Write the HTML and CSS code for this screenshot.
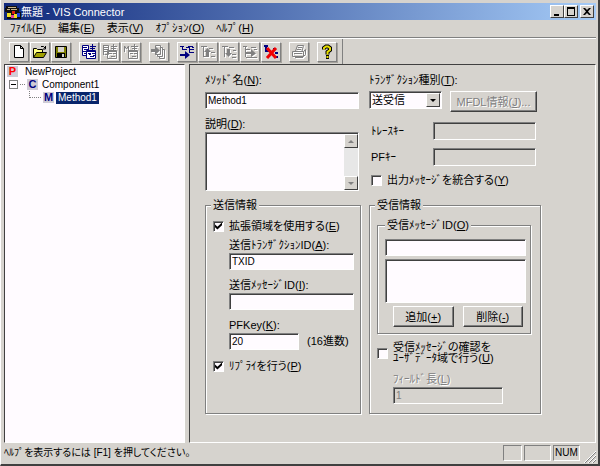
FILE: index.html
```html
<!DOCTYPE html>
<html lang="ja">
<head>
<meta charset="utf-8">
<title>無題 - VIS Connector</title>
<link rel="stylesheet" href="styles.css">
</head>
<body>
<div class="window">
  <header class="titlebar">
    <svg class="app-icon" viewBox="0 0 16 16" aria-hidden="true">
      <path fill="#111" d="M1 2h11v2h2v4h2v7H2V8H0V4h1z"/>
      <path fill="#c8b48c" d="M3 3h8v1H3zM2 5h3v1H2zM6 5h6v1H6z"/>
      <path fill="#e02010" d="M7 7h3v3H7z"/>
      <path fill="#f0e020" d="M2 9h4v4H2zM9 10h3v4H9z"/>
      <path fill="#2040e0" d="M12 9h3v4h-3z"/>
      <path fill="#e040a0" d="M6 11h3v3H6z"/>
    </svg>
    <h1 class="title">無題 - VIS Connector</h1>
    <button class="cap" aria-label="最小化"><svg viewBox="0 0 10 9"><path d="M2 7h5v2H2z"/></svg></button>
    <button class="cap" aria-label="最大化"><svg viewBox="0 0 10 9"><path fill-rule="evenodd" d="M1 0h8v9H1zM2 2v6h6V2z"/></svg></button>
    <button class="cap cap-close" aria-label="閉じる"><svg viewBox="0 0 10 9"><path d="M1 1h2l2 2 2-2h2L6 4.500l3 3.500H7L5 6 3 8H1l3-3.500z"/></svg></button>
  </header>

  <nav class="menubar">
    <button>ﾌｧｲﾙ(<u>F</u>)</button>
    <button>編集(<u>E</u>)</button>
    <button>表示(<u>V</u>)</button>
    <button>ｵﾌﾟｼｮﾝ(<u>O</u>)</button>
    <button>ﾍﾙﾌﾟ(<u>H</u>)</button>
  </nav>

  <div class="toolbar">
    <div class="tools">
      <button aria-label="新規"><svg viewBox="0 0 16 16"><path fill="#fff" stroke="#000" d="M3.500 1.500h6l3 3v9h-9zM9.500 1.500v3h3"/></svg></button>
      <button aria-label="開く"><svg viewBox="0 0 16 16"><path fill="#ffff80" stroke="#000" d="M1.500 13.500v-9h3l1 1h5v3"/><path fill="#a0a000" stroke="#000" d="M1.500 13.500l3-5h10l-3 5z"/><path fill="none" stroke="#000" d="M9 2.500h2.500l1.500 1.500M13.500 2v3H11"/></svg></button>
      <button aria-label="保存"><svg viewBox="0 0 16 16"><path fill="#808000" stroke="#000" d="M2.500 2.500h11v11h-11z"/><path fill="#d6d3ce" d="M5 3h6v5H5z"/><path d="M4 9h8v5H4z"/><path fill="#d6d3ce" d="M9 10h2v3H9z"/></svg></button>
    </div>
    <div class="tools">
      <button aria-label="プロジェクト"><svg viewBox="0 0 16 16"><path fill="#fff" stroke="#000080" d="M1.500 1.500h6v10h-6z"/><path stroke="#000080" d="M2 3.500h4M3 5.500h4M2 7.500h4M3 9.500h2M9 2.500h6M11.500 0v6M9 4.500h5"/><path fill="#fff" stroke="#000080" d="M5.500 6.500h9v8h-9z"/><path stroke="#000080" d="M5 7.500h10M7 9.500h3M8 10.500h2M9 12.500h4M11 9.500h3M12 11.500h2"/></svg></button>
      <button class="off" disabled aria-label="コンポーネント"><svg viewBox="0 0 16 16"><path fill="none" stroke="#808080" d="M1.500 1.500h5v9h-4M1.500 1v10M2 3.500h4M2 5.500h4M2 7.500h3M9 2.500h6M11.500 0v6M9 4.500h5M5.500 6.500h9v8h-9zM5 7.500h10M7 9.500h3M9 12.500h4M11 9.500h3"/></svg></button>
      <button class="off" disabled aria-label="メソッド"><svg viewBox="0 0 16 16"><path fill="none" stroke="#808080" d="M1.500 8V2l2 3 2-3v6M8 2.500h7M11.500 0v6M9 4.500h5M5.500 6.500h9v8h-9zM5 7.500h10M7 9.500h3M9 12.500h4M11 9.500h3"/></svg></button>
    </div>
    <div class="tools">
      <button class="off" disabled aria-label="出力"><svg viewBox="0 0 16 16"><path fill="none" stroke="#808080" d="M4.500 4V1.500h5v9h-5V9M9.500 3.500h2v9h-5v-2M11.500 5.500h2v9h-5v-2"/><path fill="#808080" d="M0 5h4V2l5 4.500L4 11V8H0z"/></svg></button>
    </div>
    <div class="tools">
      <button aria-label="追加"><svg viewBox="0 0 16 16"><path fill="none" stroke="#000080" d="M1 2.500h4M3.500 2v4M3 5.500h5M7 3.500h3M9 2.500h5M10 5.500h5M11 8.500h4M10.500 3v6M13 3.500h2"/><path fill="#000080" d="M1 10h5V7l5 4-5 4v-3H1z"/></svg></button>
      <button class="off" disabled aria-label="上へ"><svg viewBox="0 0 16 16"><path fill="none" stroke="#808080" d="M1 2.500h6M3.500 2v11M4 12.500h2M9 4.500h4M11 8.500h4M11 12.500h4"/><path fill="#808080" d="M4 8l3.500-4L11 8H9v5H6V8z"/></svg></button>
      <button class="off" disabled aria-label="下へ"><svg viewBox="0 0 16 16"><path fill="none" stroke="#808080" d="M1 2.500h6M3.500 2v11M8 3.500h5M12 6.500h3M11 10.500h4M11 13.500h4"/><path fill="#808080" d="M6 5h3v4h2l-3.500 4L4 9h2z"/></svg></button>
      <button class="off" disabled aria-label="移動"><svg viewBox="0 0 16 16"><path fill="none" stroke="#808080" d="M1 2.500h4M3.500 2v11M4 5.500h4M9 3.500h5M12 5.500h3M4 13.500h11"/><path fill="#808080" d="M4 8h5V5l5 4.500L9 13v-3H4z"/></svg></button>
      <button aria-label="削除"><svg viewBox="0 0 16 16"><path fill="none" stroke="#000080" stroke-width="2" d="M1 2h4M3 2v5h4M10 5h3M12 9h3M12 13h3"/><path stroke="#f00000" stroke-width="3" d="M4 4l9 10M13 4L4 14"/></svg></button>
    </div>
    <div class="tools">
      <button class="off" disabled aria-label="印刷"><svg viewBox="0 0 16 16"><path fill="none" stroke="#808080" d="M4.500 7l2-5.500h6L11 7M1.500 7.500h11v5h-11zM12.500 7.500l2-2v5l-2 2M3 9.500h8M4 13.500h8M7 3.500h4M6 5.500h4"/></svg></button>
    </div>
    <div class="tools">
      <button aria-label="ヘルプ"><svg viewBox="0 0 16 16"><path fill="none" stroke="#000" stroke-width="4" d="M5 5.500V4l2-1.500h2L11 4v2L8.500 8v2.500M7 13h3"/><path fill="none" stroke="#e8e000" stroke-width="2" d="M5 5.500V4l2-1.500h2L11 4v2L8.500 8v2.500M7.500 13h2"/></svg></button>
    </div>
  </div>

  <main class="panes">
    <ul class="tree">
      <li><span class="badge project">P</span><span class="name">NewProject</span></li>
      <li class="level-1"><button class="toggle" aria-label="折りたたむ"></button><span class="twig"></span><span class="badge">C</span><span class="name">Component1</span></li>
      <li class="level-2"><span class="elbow"></span><span class="badge">M</span><span class="name selected">Method1</span></li>
    </ul>

    <form class="form">
      <section class="basic">
        <label for="method">ﾒｿｯﾄﾞ名(<u>N</u>):</label>
        <input class="sunken" id="method" type="text" value="Method1">
        <label for="desc">説明(<u>D</u>):</label>
        <div class="memo sunken">
          <textarea id="desc"></textarea>
          <div class="scroll" aria-hidden="true">
            <span class="arrow"><svg viewBox="0 0 8 4"><path d="M4 0l4 4H0z"/></svg></span>
            <span class="arrow"><svg viewBox="0 0 8 4"><path d="M0 0h8L4 4z"/></svg></span>
          </div>
        </div>
      </section>

      <section class="kind">
        <label for="kind">ﾄﾗﾝｻﾞｸｼｮﾝ種別(<u>T</u>):</label>
        <div class="kind-row">
          <div class="combo sunken">
            <select id="kind"><option>送受信</option></select>
            <span class="arrow"><svg viewBox="0 0 8 4"><path d="M0 0h8L4 4z"/></svg></span>
          </div>
          <button class="push" type="button" disabled>MFDL情報(<u>J</u>)...</button>
        </div>
        <div class="key-row"><label for="trace">ﾄﾚｰｽｷｰ</label><input class="sunken" id="trace" type="text" disabled></div>
        <div class="key-row"><label for="pf">PFｷｰ</label><input class="sunken" id="pf" type="text" disabled></div>
        <label class="check"><input type="checkbox"><span>出力ﾒｯｾｰｼﾞを統合する(<u>Y</u>)</span></label>
      </section>

      <fieldset class="group send">
        <legend>送信情報</legend>
        <label class="check"><input type="checkbox" checked><span>拡張領域を使用する(<u>E</u>)</span></label>
        <div class="indent">
          <label for="txid">送信ﾄﾗﾝｻﾞｸｼｮﾝID(<u>A</u>):</label>
          <input class="sunken" id="txid" type="text" value="TXID">
          <label class="later" for="msgid">送信ﾒｯｾｰｼﾞID(<u>I</u>):</label>
          <input class="sunken" id="msgid" type="text">
          <label class="later" for="pfkey">PFKey(<u>K</u>):</label>
          <div class="hex"><input class="sunken" id="pfkey" type="text" value="20"><span>(16進数)</span></div>
        </div>
        <label class="check reply"><input type="checkbox" checked><span>ﾘﾌﾟﾗｲを行う(<u>P</u>)</span></label>
      </fieldset>

      <fieldset class="group receive">
        <legend>受信情報</legend>
        <fieldset class="group ids">
          <legend>受信ﾒｯｾｰｼﾞID(<u>O</u>)</legend>
          <input class="sunken" type="text" aria-label="受信メッセージID">
          <select class="list sunken" size="3" aria-label="受信メッセージID一覧"></select>
          <div class="actions">
            <button class="push" type="button">追加(<u>+</u>)</button>
            <button class="push" type="button">削除(<u>-</u>)</button>
          </div>
        </fieldset>
        <label class="check confirm"><input type="checkbox"><span>受信ﾒｯｾｰｼﾞの確認を<br>ﾕｰｻﾞﾃﾞｰﾀ域で行う(<u>U</u>)</span></label>
        <div class="field-length">
          <label class="dim" for="len">ﾌｨｰﾙﾄﾞ長(<u>L</u>)</label>
          <input class="sunken" id="len" type="text" value="1" disabled>
        </div>
      </fieldset>
    </form>
  </main>

  <footer class="status">
    <span class="hint">ﾍﾙﾌﾟを表示するには [F1] を押してください。</span>
    <span class="cell"></span>
    <span class="cell wide"></span>
    <span class="cell wide">NUM</span>
    <svg class="grip" viewBox="0 0 12 12" aria-hidden="true"><path stroke="#808080" d="M1 12L12 1M5 12l7-7M9 12l3-3"/><path stroke="#fff" d="M0 12L12 0M4 12l8-8M8 12l4-4"/></svg>
  </footer>
</div>
</body>
</html>
```
FILE: styles.css
```css
:root {
  --face: #d6d3ce;
  --shade: #808080;
  --dark: #404040;
  --field: #fffbff;
}

* {
  box-sizing: border-box;
}

body {
  margin: 0;
  font: 11px/12px "Liberation Sans", "Noto Sans CJK JP", sans-serif;
  font-feature-settings: "palt";
  color: #000;
}

button,
input,
select,
textarea {
  margin: 0;
  padding: 0;
  border: 0;
  border-radius: 0;
  outline: 0;
  font: inherit;
  color: inherit;
  background: none;
}

svg {
  display: block;
}

.window {
  display: flex;
  flex-direction: column;
  min-height: 100vh;
  padding: 3px 2px 1px 3px;
  background: var(--face);
  border: solid;
  border-width: 0 2px 2px 1px;
  border-color: var(--face) var(--dark) var(--dark) #fff;
}

/* Title bar */
.titlebar {
  display: flex;
  align-items: center;
  height: 17px;
  padding: 0 2px 0 1px;
  background: linear-gradient(90deg, #10297b, #a5cbf7);
}

.app-icon {
  width: 16px;
  height: 16px;
}

.title {
  flex: 1;
  margin: 0;
  font-size: 11px;
  font-weight: normal;
  color: #fff;
}

.cap {
  display: grid;
  place-items: center;
  width: 14px;
  height: 13px;
  background: var(--face);
  border: 1px solid;
  border-color: #fff var(--dark) var(--dark) #fff;
}

.cap svg {
  width: 10px;
  height: 9px;
}

.cap-close {
  margin-left: 2px;
}

/* Menu and tool bar */
.menubar {
  display: flex;
  gap: 12px;
  height: 18px;
  padding: 0 6px 2px;
  border-bottom: 1px solid var(--shade);
}

.toolbar {
  display: flex;
  gap: 8px;
  padding: 0 5px;
  border-top: 1px solid #fff;
}

.tools {
  display: flex;
  gap: 1px;
  padding: 3px 0 2px;
}

.tools button {
  display: grid;
  place-items: center;
  width: 20px;
  height: 20px;
  border: 1px solid;
  border-color: #fff var(--shade) var(--shade) #fff;
  box-shadow: 1px 1px 0 #a5a29c;
}

.tools svg {
  width: 16px;
  height: 16px;
}

.tools .off svg {
  filter: drop-shadow(1px 1px 0 #fff);
}

.tools:last-child {
  padding-right: 5px;
  border-right: 1px solid var(--shade);
}

/* Panes */
.panes {
  display: flex;
  flex: 1;
  gap: 4px;
}

.tree {
  flex: 0 0 181px;
  margin: 0;
  padding: 0 2px;
  list-style: none;
  font-size: 10px;
  background: var(--field);
  border: 1px solid;
  border-color: var(--dark) #fff #fff var(--dark);
}

.tree li {
  display: flex;
  align-items: center;
  gap: 5px;
  height: 13px;
}

.tree .level-1 {
  gap: 2px;
  padding-left: 2px;
}

.tree .level-2 {
  padding-left: 22px;
  gap: 2px;
}

.badge {
  width: 11px;
  text-align: center;
  font: bold 11px/11px "Liberation Sans", sans-serif;
  color: #000080;
  background: #cecbd6;
}

.project {
  color: #f00;
}

.name {
  padding: 0 2px;
}

.selected {
  color: #fff;
  background: #08246b;
}

.toggle {
  width: 9px;
  height: 9px;
  padding: 0 1px;
  border: 1px solid var(--shade);
}

.toggle::before {
  content: "";
  display: block;
  height: 1px;
  background: #000;
}

.twig {
  width: 5px;
  border-top: 1px dotted var(--shade);
}

.elbow {
  align-self: flex-start;
  width: 12px;
  height: 7px;
  border: dotted var(--shade);
  border-width: 0 0 1px 1px;
}

.form {
  flex: 1;
  display: grid;
  grid-template-columns: 156px 172px;
  grid-template-rows: auto auto;
  align-content: start;
  column-gap: 8px;
  padding: 9px 15px;
  border: 1px solid;
  border-color: var(--dark) #fff #fff var(--dark);
}

/* Controls */
.sunken {
  height: 17px;
  padding: 0 2px;
  background: var(--field);
  border: 1px solid;
  border-color: var(--shade) #fff #fff var(--shade);
  box-shadow: inset 1px 1px 0 var(--dark);
}

input.sunken {
  display: block;
  width: 100%;
  font-size: 10px;
}

input.sunken:disabled {
  color: var(--shade);
  background: var(--face);
}

.push {
  height: 21px;
  white-space: nowrap;
  background: var(--face);
  border: 1px solid;
  border-color: #fff var(--dark) var(--dark) #fff;
  box-shadow: inset -1px -1px 0 var(--shade);
}

.push:disabled,
.dim {
  color: var(--shade);
  text-shadow: 1px 1px 0 #fff;
}

.arrow {
  display: grid;
  place-items: center;
  width: 14px;
  height: 14px;
  background: var(--face);
  border: 1px solid;
  border-color: #fff var(--dark) var(--dark) #fff;
}

.arrow svg {
  width: 6px;
  height: 3px;
}

.check {
  display: flex;
  align-items: center;
  gap: 5px;
  white-space: nowrap;
}

.check input {
  appearance: none;
  display: grid;
  place-items: center;
  flex: none;
  width: 11px;
  height: 11px;
  background: var(--field);
  border: 1px solid;
  border-color: var(--shade) #fff #fff var(--shade);
  box-shadow: inset 1px 1px 0 var(--dark);
}

.check input:checked::before {
  content: "";
  width: 7px;
  height: 7px;
  background: #000;
  clip-path: polygon(0 30%, 35% 62%, 100% 0, 100% 40%, 35% 100%, 0 68%);
}

/* Form sections */
.basic {
  padding-right: 2px;
}

.basic label,
.kind > label {
  display: block;
}

.basic input {
  margin: 6px 0 9px;
}

.memo {
  display: flex;
  height: 59px;
  margin-top: 2px;
  padding: 1px 0 0 1px;
}

.memo textarea {
  flex: 1;
  min-width: 0;
  resize: none;
}

.scroll {
  display: flex;
  flex-direction: column;
  justify-content: space-between;
  background: #e7e7e7;
}

.scroll svg {
  fill: var(--shade);
}

.kind-row {
  display: flex;
  gap: 8px;
  margin: 5px 0 10px;
}

.combo {
  display: flex;
  width: 73px;
  height: 18px;
  padding: 1px 1px 1px 2px;
}

.combo select {
  flex: 1;
  min-width: 0;
  appearance: none;
}

.kind-row .push {
  width: 87px;
}

.key-row {
  display: flex;
  align-items: center;
  gap: 8px;
  margin-bottom: 8px;
  padding: 0 5px 0 2px;
}

.key-row label {
  flex: 1;
}

.key-row .sunken {
  width: 103px;
  height: 18px;
}

.kind .check {
  display: flex;
  padding: 0 2px;
}

.group {
  min-width: 0;
  margin: 0;
  border: 1px solid var(--shade);
  box-shadow: 1px 1px 0 #fff, inset 1px 1px 0 #fff;
}

.group legend {
  padding: 0 2px;
  line-height: 14px;
  background: var(--face);
}

.send,
.receive {
  height: 216px;
  margin-top: 7px;
}

.send {
  padding: 8px 7px;
}

.send legend {
  margin-left: -2px;
}

.indent {
  padding: 7px 0 0 16px;
}

.indent label {
  display: block;
}

.indent .sunken {
  width: 125px;
  margin-top: 2px;
}

.indent .later {
  margin-top: 9px;
}

.indent .hex {
  display: flex;
  align-items: center;
  gap: 8px;
}

.indent .hex .sunken {
  width: 70px;
}

.reply {
  margin-top: 10px;
}

.receive {
  padding: 6px 9px 0 7px;
}

.receive > legend {
  margin-left: -2px;
}

.ids {
  padding: 7px 4px 6px 7px;
}

.ids .list {
  display: block;
  width: 100%;
  height: 44px;
  margin: 3px 0;
}

.actions {
  display: flex;
  gap: 9px;
  padding: 0 3px 0 8px;
}

.actions .push {
  flex: 1;
}

.confirm {
  margin-top: 8px;
  line-height: 11px;
}

.field-length {
  padding: 9px 28px 0 16px;
}

.field-length .sunken {
  margin-top: 2px;
}

/* Status bar */
.status {
  display: flex;
  align-items: center;
  gap: 2px;
  height: 20px;
}

.hint {
  flex: 1;
  font-size: 10px;
}

.cell {
  width: 19px;
  height: 16px;
  font-size: 10px;
  line-height: 14px;
  text-align: center;
  border: 1px solid;
  border-color: var(--shade) #fff #fff var(--shade);
}

.wide {
  width: 27px;
}

.grip {
  align-self: flex-end;
  width: 12px;
  height: 12px;
  margin-left: 2px;
}
```
